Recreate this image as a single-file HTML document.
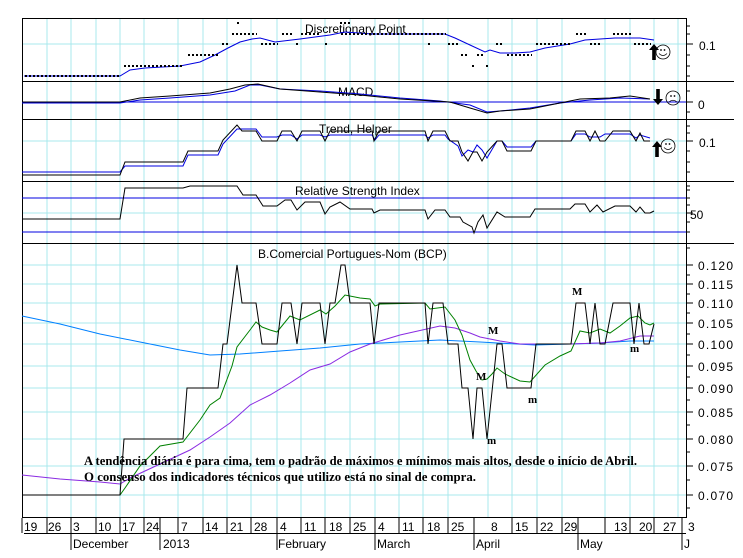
<!DOCTYPE html>
<html><head><meta charset="utf-8"><style>
html,body{margin:0;padding:0;background:#fff;width:743px;height:558px;overflow:hidden}
svg{display:block}
text{font-family:"Liberation Sans",sans-serif;font-size:12px;fill:#000}
.s{font-family:"Liberation Serif",serif;font-weight:bold;font-size:13px}
.ml{font-family:"Liberation Serif",serif;font-weight:bold;font-size:11px}
</style></head><body>
<svg width="743" height="558" viewBox="0 0 743 558" xmlns="http://www.w3.org/2000/svg">
<defs>
<g id="smile"><circle cx="0" cy="0" r="7" fill="none" stroke="#000" stroke-width="0.8"/><circle cx="-2" cy="-2" r="0.9"/><circle cx="1.5" cy="-2" r="0.9"/><path d="M-4 1.5 Q0 5.5 4 1.5" fill="none" stroke="#000" stroke-width="0.8"/></g>
<g id="sad"><circle cx="0" cy="0" r="7" fill="none" stroke="#000" stroke-width="0.8"/><circle cx="-2" cy="-2" r="0.9"/><circle cx="1.5" cy="-2" r="0.9"/><path d="M-4 4 Q0 0.5 4 4" fill="none" stroke="#000" stroke-width="0.8"/></g>
<path id="up" d="M0 -8 L5 -2 L1.8 -2 L1.8 8 L-1.8 8 L-1.8 -2 L-5 -2 Z"/>
<path id="dn" d="M0 8 L5 2 L1.8 2 L1.8 -8 L-1.8 -8 L-1.8 2 L-5 2 Z"/>
</defs>
<g stroke="#a8e8ec" stroke-width="1">
<path d="M47 19V517M71 19V517M96 19V517M120 19V517M144 19V517M178 19V517M203 19V517M227 19V517M251 19V517M277 19V517M301 19V517M325 19V517M350 19V517M375 19V517M399 19V517M423 19V517M448 19V517M488 19V517M512 19V517M537 19V517M562 19V517M605 19V517M630 19V517M654 19V517M678 19V517"/>
<path d="M22 44H686M22 141H686M22 213H686M22 265H686M22 284H686M22 303H686M22 323H686M22 344H686M22 366H686M22 388H686M22 412H686M22 439H686M22 466H686M22 495H686"/>
</g>
<g stroke="#000" stroke-width="1" fill="none">
<path d="M22.5 18.5H686.5V517.5H22.5Z"/>
<path d="M22 81.5H734M22 119.5H734M22 181.5H734M22 243.5H734M22 517.5H686"/>
<path d="M686 26h4M686 34h4M686 44h7M686 55h4M686 66h4M686 76h4M686 91h4M686 102h7M686 112h4M686 126h4M686 133h4M686 141h7M686 151h4M686 162h4M686 172h4M686 186h4M686 190h4M686 198h4M686 205h4M686 213h7M686 222h4M686 232h4M686 248h4M686 265h7M686 275h4M686 284h7M686 294h4M686 303h7M686 313h4M686 323h7M686 334h4M686 344h7M686 355h4M686 366h7M686 377h4M686 388h7M686 400h4M686 412h7M686 425h4M686 439h7M686 452h4M686 466h7M686 480h4M686 495h7M686 508h4"/>
</g>
<g font-size="13"><text x="699" y="50">0.1</text><text x="698" y="109">0</text><text x="699" y="147">0.1</text><text x="690" y="219">50</text></g>
<g font-size="13"><text x="698" y="270" textLength="35">0.120</text><text x="698" y="289" textLength="35">0.115</text><text x="698" y="308" textLength="35">0.110</text><text x="698" y="328" textLength="35">0.105</text><text x="698" y="349" textLength="35">0.100</text><text x="698" y="371" textLength="35">0.095</text><text x="698" y="393" textLength="35">0.090</text><text x="698" y="417" textLength="35">0.085</text><text x="698" y="444" textLength="35">0.080</text><text x="698" y="471" textLength="35">0.075</text><text x="698" y="500" textLength="35">0.070</text></g>
<text x="305" y="33">Discretionary Point</text>
<text x="338" y="96">MACD</text>
<text x="319" y="133">Trend, Helper</text>
<text x="295" y="195">Relative Strength Index</text>
<text x="258" y="258">B.Comercial Portugues-Nom (BCP)</text>
<polyline fill="none" stroke="#0000e0" points="24,76 120,76 130,70 145,68 180,66 200,62 215,55 228,48 240,42 252,39 260,38 275,42 300,39 330,35 345,32 372,34 445,34 455,38 470,45 485,52 490,50 500,53 515,53 530,52 545,48 570,44 585,40 615,38 640,38 654,40"/>
<g stroke="#000" stroke-width="2" stroke-dasharray="2 2" fill="none">
<path d="M25 76H120M124 66H184M188 55H218M222 44H229M232 34H257M261 44H278M282 34H292M296 44H299M301 34H321M325 44H327M340 23H350M341 34H446M428 44H430M448 44H459M461 55H469M472 66H475M477 55H483M486 66H489M496 44H503M507 55H532M536 44H571M576 34H586M590 44H601M613 34H631M634 44H651M237 23H239"/>
</g>
<use href="#up" x="654" y="52"/><use href="#smile" x="663" y="52"/>
<polyline fill="none" stroke="#0000e0" points="22,102 686,102"/>
<polyline fill="none" stroke="#0000e0" points="22,103 120,103 140,100 170,98 210,95 235,91 250,85 260,85 280,89 320,91 360,94 400,98 440,101 470,105 487,112 500,111 530,108 560,103 590,100 620,98 650,99"/>
<polyline fill="none" stroke="#000" points="22,102 120,102 140,98 170,96 210,93 230,89 245,85 258,84 280,89 320,92 360,95 400,99 450,102 470,108 487,113 500,111 530,109 555,104 580,99 610,98 630,96 650,99"/>
<use href="#dn" x="658" y="97"/><use href="#sad" x="673" y="98"/>
<polyline fill="none" stroke="#0000e0" points="22,172 120,172 125,166 183,166 188,155 218,155 223,144 237,129 242,129 256,129 262,137 277,137 282,135 291,135 297,139 302,135 320,135 325,137 330,135 372,135 375,140 379,135 425,135 428,138 433,135 445,135 448,139 458,146 462,156 468,150 473,152 477,145 482,150 487,158 497,141 502,141 507,147 531,147 536,141 571,141 576,134 585,134 590,137 600,137 605,134 615,134 630,134 636,138 640,135 650,138"/>
<polyline fill="none" stroke="#000" points="22,175 120,175 125,162 183,162 188,151 218,151 223,140 237,125 242,131 256,131 262,141 277,141 282,131 291,131 297,141 302,131 320,131 325,141 330,131 372,131 374,141 379,131 425,131 428,141 433,131 445,131 450,141 458,141 462,152 468,161 473,152 477,152 482,161 487,152 497,141 502,141 507,151 531,151 536,141 571,141 576,131 585,131 590,141 595,131 600,141 605,141 613,131 630,131 636,141 640,133 644,141 650,141"/>
<use href="#up" x="657" y="149"/><use href="#smile" x="668" y="146"/>
<path d="M22 198H686M22 232H686" stroke="#0000e0"/>
<polyline fill="none" stroke="#000" points="22,219 120,219 125,188 183,188 190,186 237,186 243,195 256,195 263,206 277,206 285,200 291,200 297,210 305,202 320,202 325,214 330,207 340,202 350,209 372,209 374,213 380,210 425,210 428,219 435,210 445,210 450,217 460,217 463,222 472,227 474,233 478,222 483,215 487,228 497,212 505,217 530,217 535,209 570,209 575,204 585,204 590,212 597,205 603,212 615,206 630,206 636,212 640,207 645,213 650,213 654,211"/>
<polyline fill="none" stroke="#0080ff" points="22,316 60,324 100,334 140,342 180,350 210,355 240,354 280,351 320,348 360,344 400,342 440,340 480,342 535,345 570,344 600,343 630,341 654,341"/>
<polyline fill="none" stroke="#8a2be2" points="22,475 60,479 100,482 120,484 130,478 160,464 190,450 210,437 230,423 250,405 270,395 290,383 310,370 330,364 350,352 370,344 400,335 440,326 455,328 470,333 480,337 500,341 520,344 540,344 570,344 600,343 620,341 640,336 654,336"/>
<polyline fill="none" stroke="#008000" points="22,495 120,495 125,488 140,466 160,446 183,442 200,420 210,405 220,398 232,366 237,347 250,330 256,322 262,327 270,330 277,332 290,316 300,320 320,310 326,314 335,306 345,295 360,298 370,299 375,306 380,304 425,303 430,309 445,307 455,320 462,335 470,360 476,371 482,380 487,379 492,374 497,368 505,374 520,381 530,382 545,365 560,356 571,351 580,331 590,333 600,329 610,333 620,326 630,318 638,316 645,323 650,325 654,323"/>
<polyline fill="none" stroke="#000" points="22,495 120,495 124,439 183,439 187,388 218,388 223,344 227,344 237,265 242,303 256,303 262,344 277,344 282,303 291,303 297,344 302,303 320,303 325,344 330,303 335,303 341,265 345,265 350,303 370,303 374,344 379,303 425,303 428,344 433,303 443,303 448,344 458,344 462,388 468,388 473,439 477,388 482,388 487,439 497,344 502,344 507,388 531,388 536,344 571,344 576,303 585,303 590,344 595,303 600,344 605,344 613,303 630,303 634,344 639,303 644,344 649,344 654,324"/>
<g><text class="ml" x="488" y="334">M</text><text class="ml" x="476" y="380">M</text><text class="ml" x="487" y="444">m</text><text class="ml" x="528" y="403">m</text><text class="ml" x="572" y="295">M</text><text class="ml" x="630" y="352">m</text></g>
<text class="s" x="84" y="465" textLength="553" lengthAdjust="spacingAndGlyphs">A tendência diária é para cima, tem o padrão de máximos e mínimos mais altos, desde o início de Abril.</text>
<text class="s" x="84" y="481" textLength="392" lengthAdjust="spacingAndGlyphs">O consenso dos indicadores técnicos que utilizo está no sinal de compra.</text>
<g stroke="#000">
<path d="M22 518V533M47 518V533M71 518V550M96 518V533M120 518V533M144 518V533M160 518V550M178 518V533M203 518V533M227 518V533M251 518V533M277 518V550M301 518V533M325 518V533M350 518V533M375 518V550M399 518V533M423 518V533M448 518V533M474 518V550M512 518V533M537 518V533M562 518V533M578 518V550M605 518V533M630 518V533M654 518V533M682 518V550M24 533.5H686"/>
</g>
<g font-size="13">
<text x="24" y="531">19</text><text x="48" y="531">26</text><text x="73" y="531">3</text><text x="98" y="531">10</text><text x="122" y="531">17</text><text x="146" y="531">24</text><text x="181" y="531">7</text><text x="205" y="531">14</text><text x="230" y="531">21</text><text x="254" y="531">28</text><text x="280" y="531">4</text><text x="304" y="531">11</text><text x="329" y="531">18</text><text x="353" y="531">25</text><text x="378" y="531">4</text><text x="402" y="531">11</text><text x="427" y="531">18</text><text x="451" y="531">25</text><text x="491" y="531">8</text><text x="515" y="531">15</text><text x="540" y="531">22</text><text x="564" y="531">29</text><text x="614" y="531">13</text><text x="639" y="531">20</text><text x="663" y="531">27</text><text x="688" y="531">3</text>
<text x="73" y="548">December</text><text x="163" y="548">2013</text><text x="278" y="548">February</text><text x="377" y="548">March</text><text x="476" y="548">April</text><text x="580" y="548">May</text><text x="684" y="548">J</text>
</g>
</svg>
</body></html>
